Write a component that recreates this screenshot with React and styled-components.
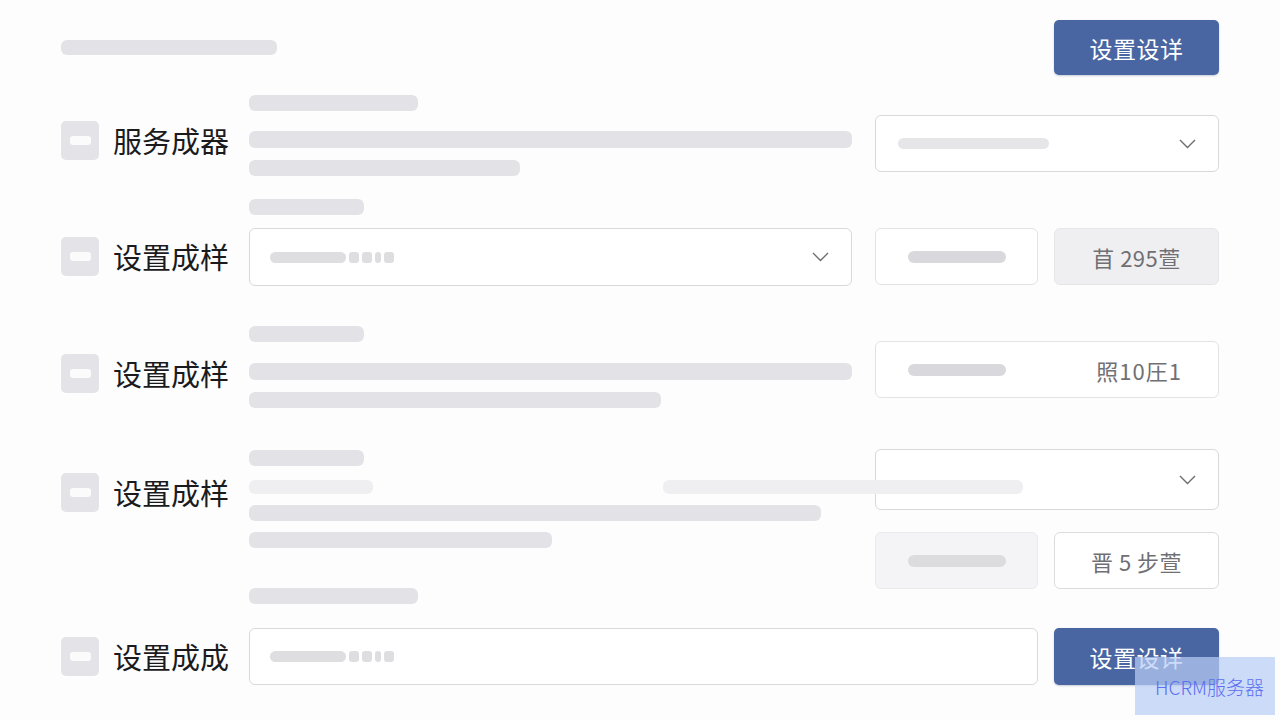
import React from 'react';
import styled, { createGlobalStyle } from 'styled-components';

const GlobalStyle = createGlobalStyle`
  body {
    margin: 0;
    background: #fdfdfd;
    font-family: "Noto Sans CJK SC", "Noto Sans", sans-serif;
  }
`;

const Page = styled.div`
  position: relative;
  width: 1280px;
  height: 720px;
  box-sizing: border-box;
  padding: 20px 61px 0;
  overflow: hidden;
`;

const Header = styled.div`
  display: flex;
  align-items: center;
  justify-content: space-between;
`;

const Bar = styled.div`
  width: ${p => p.$w}px;
  height: ${p => p.$h || 16}px;
  margin-top: ${p => p.$mt || 0}px;
  margin-left: ${p => p.$ml || 0}px;
  border-radius: 6px;
  background: ${p => (p.$light ? '#efeff1' : '#e3e3e7')};
  flex-shrink: 0;
`;

const PrimaryButton = styled.button`
  width: 165px;
  height: ${p => p.$h || 56}px;
  flex-shrink: 0;
  border: none;
  border-radius: 5px;
  background: #4966a2;
  color: #fff;
  font-family: inherit;
  font-size: 23px;
  letter-spacing: 0.5px;
  box-shadow: 0 1px 2px rgba(40, 60, 110, 0.25);
`;

const Row = styled.div`
  display: grid;
  grid-template-columns: 165px 603px 344px;
  column-gap: 23px;
  align-items: start;
  margin-top: ${p => p.$gap}px;
`;

const Label = styled.div`
  display: flex;
  align-items: center;
  gap: 14px;
  margin-top: ${p => p.$top}px;
  white-space: nowrap;
  font-size: 29px;
  line-height: 40px;
  color: #1b1b1d;
`;

const Check = styled.span`
  width: 38px;
  height: 39px;
  border-radius: 5px;
  background: #e4e4e8;
  display: flex;
  align-items: center;
  justify-content: center;
  flex-shrink: 0;

  &::after {
    content: '';
    width: 21px;
    height: 9px;
    border-radius: 3px;
    background: #fbfbfc;
  }
`;

const Stack = styled.div`
  display: flex;
  flex-direction: column;
  grid-column: ${p => (p.$wide ? '2 / 4' : 'auto')};
`;

const Line = styled.div`
  display: flex;
  gap: ${p => p.$gap || 0}px;
  margin-top: ${p => p.$mt || 0}px;
  position: relative;
  z-index: 1;
`;

const RightCol = styled.div`
  display: flex;
  flex-direction: column;
  gap: 22px;
  margin-top: ${p => p.$top}px;
`;

const Pair = styled.div`
  display: flex;
  gap: 16px;
`;

const Select = styled.div`
  width: ${p => p.$w || 344}px;
  height: ${p => p.$h || 57}px;
  margin-top: ${p => p.$mt || 0}px;
  box-sizing: border-box;
  border: 1.5px solid #d9d9dd;
  border-radius: 6px;
  background: #fff;
  display: flex;
  align-items: center;
  justify-content: space-between;
  padding: 0 22px 0 ${p => p.$pl || 22}px;
`;

const Field = styled.div`
  width: ${p => p.$w || 163}px;
  height: 57px;
  box-sizing: border-box;
  border: 1.5px solid ${p => (p.$muted ? '#ebebed' : '#e3e3e6')};
  border-radius: 6px;
  background: ${p => (p.$muted ? '#f4f4f6' : '#fff')};
  display: flex;
  align-items: center;
  justify-content: ${p => (p.$text ? 'space-between' : 'center')};
  padding: ${p => (p.$text ? '0 36px 0 32px' : '0')};
  font-size: 22px;
  letter-spacing: 1px;
  color: #707075;
`;

const Pill = styled.div`
  width: ${p => p.$w}px;
  height: ${p => p.$h || 12}px;
  border-radius: 6px;
  background: ${p => p.$c || '#d9d9dd'};
`;

const GhostButton = styled.div`
  width: 165px;
  height: 57px;
  box-sizing: border-box;
  border: 1.5px solid ${p => (p.$muted ? '#e6e6e8' : '#dcdcdf')};
  border-radius: 6px;
  background: ${p => (p.$muted ? '#efeff1' : '#fff')};
  display: flex;
  align-items: center;
  justify-content: center;
  font-size: 22px;
  color: #6f6f74;
  letter-spacing: 0.5px;
`;

const Placeholder = styled.div`
  display: flex;
  align-items: center;
  gap: 3px;
`;

const Dot = styled.span`
  width: ${p => p.$w || 10}px;
  height: 11px;
  border-radius: 3px;
  background: #dedee1;
`;

const Input = styled.div`
  width: 789px;
  height: 57px;
  box-sizing: border-box;
  border: 1.5px solid #d9d9dd;
  border-radius: 6px;
  background: #fff;
  display: flex;
  align-items: center;
  padding-left: 20px;
`;

const Watermark = styled.div`
  position: absolute;
  z-index: 10;
  left: 1135px;
  top: 657px;
  width: 140px;
  height: 58px;
  background: rgba(185, 205, 245, 0.72);
  color: #5b6ff0;
  font-size: 19px;
  font-weight: 300;
  display: flex;
  align-items: center;
  justify-content: flex-end;
  padding-right: 11px;
  box-sizing: border-box;
`;

const Chevron = () => (
  <svg width="17" height="10" viewBox="0 0 17 10">
    <polyline points="1,1 8.5,8.5 16,1" fill="none" stroke="#6d6d72" strokeWidth="1.4" />
  </svg>
);

const Dotted = () => (
  <Placeholder>
    <Pill $w={76} $h={11} $c="#dedee1" />
    <Dot />
    <Dot />
    <Dot $w={6} />
    <Dot />
  </Placeholder>
);

const Caption = ({ text, top }) => (
  <Label $top={top}>
    <Check />
    {text}
  </Label>
);

export default function App() {
  return (
    <Page>
      <GlobalStyle />
      <Header>
        <Bar $w={216} $h={15} />
        <PrimaryButton $h={55}>设置设详</PrimaryButton>
      </Header>

      <Row $gap={20}>
        <Caption text="服务成器" top={25} />
        <Stack>
          <Bar $w={169} />
          <Bar $w={603} $h={17} $mt={20} />
          <Bar $w={271} $mt={12} />
        </Stack>
        <RightCol $top={20}>
          <Select>
            <Pill $w={151} $h={11} $c="#e6e6e9" />
            <Chevron />
          </Select>
        </RightCol>
      </Row>

      <Row $gap={23}>
        <Caption text="设置成样" top={37} />
        <Stack>
          <Bar $w={115} />
          <Select $w={603} $h={58} $mt={13} $pl={20}>
            <Dotted />
            <Chevron />
          </Select>
        </Stack>
        <RightCol $top={29}>
          <Pair>
            <Field>
              <Pill $w={98} />
            </Field>
            <GhostButton $muted>苜 295萱</GhostButton>
          </Pair>
        </RightCol>
      </Row>

      <Row $gap={40}>
        <Caption text="设置成样" top={27} />
        <Stack>
          <Bar $w={115} />
          <Bar $w={603} $h={17} $mt={21} />
          <Bar $w={412} $mt={12} />
        </Stack>
        <RightCol $top={15}>
          <Field $w={344} $text>
            <Pill $w={98} />
            <span>照10圧1</span>
          </Field>
        </RightCol>
      </Row>

      <Row $gap={42}>
        <Caption text="设置成样" top={22} />
        <Stack>
          <Bar $w={115} />
          <Line $mt={14}>
            <Bar $w={124} $h={14} $light />
            <Bar $w={360} $h={14} $ml={290} $light />
          </Line>
          <Bar $w={572} $mt={11} />
          <Bar $w={303} $mt={11} />
        </Stack>
        <RightCol $top={-1}>
          <Select $h={61}>
            <span />
            <Chevron />
          </Select>
          <Pair>
            <Field $muted>
              <Pill $w={98} $c="#dcdcdf" />
            </Field>
            <GhostButton>晋 5 步萱</GhostButton>
          </Pair>
        </RightCol>
      </Row>

      <Row $gap={-1}>
        <Caption text="设置成成" top={48} />
        <Stack $wide>
          <Bar $w={169} />
          <Line $mt={24} $gap={16}>
            <Input>
              <Dotted />
            </Input>
            <PrimaryButton $h={57}>设置设详</PrimaryButton>
          </Line>
        </Stack>
      </Row>

      <Watermark>HCRM服务器</Watermark>
    </Page>
  );
}
